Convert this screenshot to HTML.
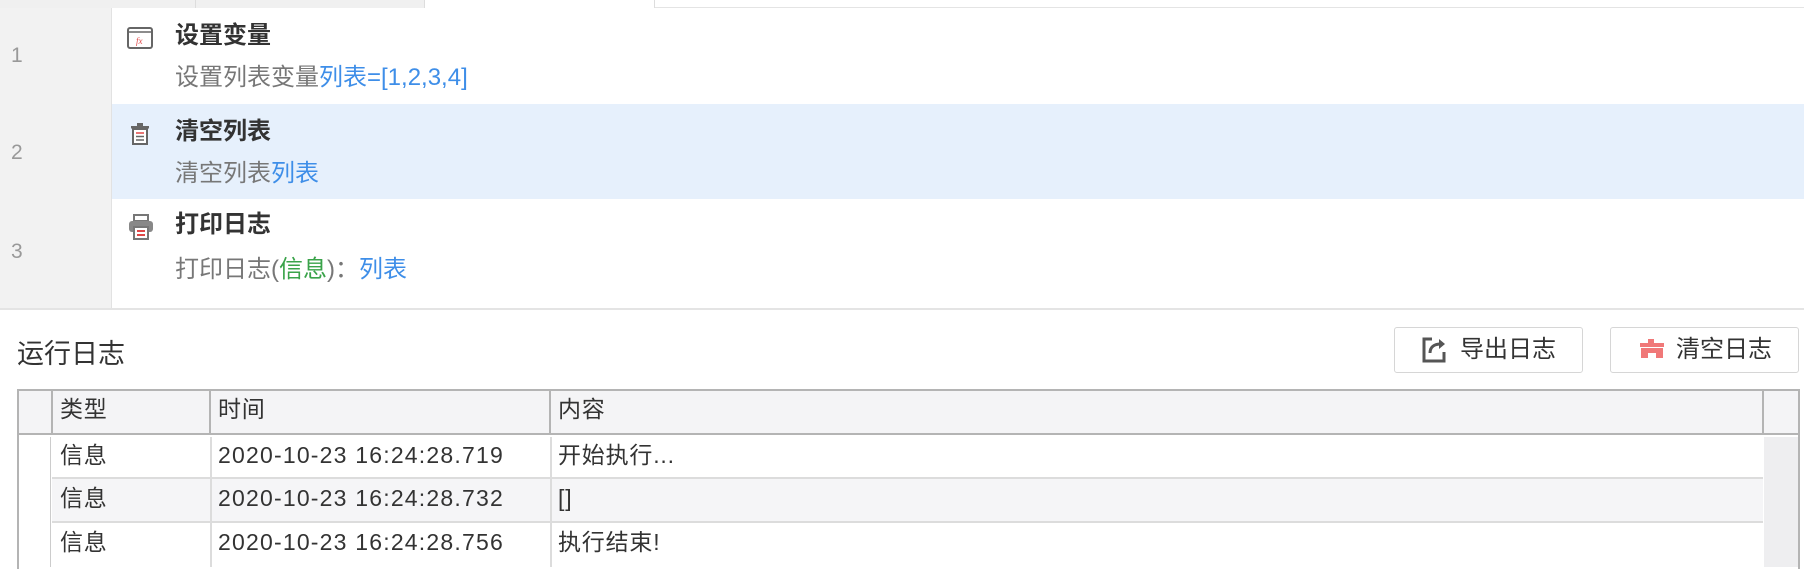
<!DOCTYPE html>
<html><head><meta charset="utf-8"><style>
*{margin:0;padding:0;box-sizing:border-box}
body{width:1804px;height:562px;overflow:hidden;background:#fff;font-family:"Liberation Sans","Noto Sans CJK SC",sans-serif;position:relative;color:#333}
.abs{position:absolute}
.tabs{left:0;top:0;width:1804px;height:8px;background:#fff;border-bottom:1px solid #e4e4e4}
.gutter{left:0;top:8px;width:112px;height:300px;background:#f2f2f2;border-right:1px solid #e2e2e2}
.num{left:11px;font-size:21px;color:#999;line-height:24px}
.row{left:112px;width:1692px}
.title{left:175px;font-size:24px;font-weight:bold;color:#333;line-height:28px}
.sub{left:175px;font-size:24px;color:#777;line-height:28px}
.b{color:#3e8ee8}.g{color:#3aa34a}
.ico{left:127px}
.t{font-size:23px;color:#333;line-height:28px;letter-spacing:0.8px}
.ts{letter-spacing:1.2px}
</style></head><body>
<div class="abs tabs"></div>
<div class="abs" style="left:0;top:0;width:196px;height:8px;background:#f0f0f0;border-right:1px solid #ddd"></div>
<div class="abs" style="left:196px;top:0;width:229px;height:8px;background:#f0f0f0;border-right:1px solid #ddd"></div>
<div class="abs" style="left:425px;top:0;width:230px;height:8px;background:#fff;border-right:1px solid #ddd"></div>
<div class="abs gutter"></div>
<div class="abs row" style="top:104px;height:95px;background:#e6f0fc"></div>
<div class="abs" style="left:0;top:308px;width:1804px;height:2px;background:#e4e4e4"></div>
<div class="abs num" style="top:44px">1</div>
<div class="abs num" style="top:141px">2</div>
<div class="abs num" style="top:240px">3</div>

<svg class="abs ico" style="top:26px" width="26" height="24" viewBox="0 0 26 24"><rect x="1" y="2" width="24" height="20" rx="2" fill="#fff" stroke="#666" stroke-width="2"/><line x1="2" y1="6" x2="24" y2="6" stroke="#666" stroke-width="1.5"/><text x="9" y="18" font-size="9" fill="#e04848" font-style="italic" font-family="Liberation Serif,serif">fx</text></svg>
<div class="abs title" style="top:22px">设置变量</div>
<div class="abs sub" style="top:64px">设置列表变量<span class="b">列表=[1,2,3,4]</span></div>

<svg class="abs ico" style="top:122px" width="26" height="24" viewBox="0 0 26 24"><rect x="10" y="1" width="6" height="3" fill="#666"/><rect x="4" y="4" width="18" height="2.5" fill="#666"/><rect x="6" y="7" width="14" height="15" fill="#fff" stroke="#666" stroke-width="2"/><line x1="9" y1="11" x2="17" y2="11" stroke="#e04848" stroke-width="1.5"/><line x1="9" y1="14.5" x2="17" y2="14.5" stroke="#666" stroke-width="1.5"/><line x1="9" y1="18" x2="17" y2="18" stroke="#666" stroke-width="1.5"/></svg>
<div class="abs title" style="top:118px">清空列表</div>
<div class="abs sub" style="top:160px">清空列表<span class="b">列表</span></div>

<svg class="abs ico" style="top:213px" width="28" height="28" viewBox="0 0 28 28"><rect x="7" y="2" width="14" height="6" fill="#fff" stroke="#777" stroke-width="2"/><rect x="2" y="8" width="24" height="11" rx="3" fill="#888"/><rect x="7" y="14" width="14" height="12" fill="#fff" stroke="#777" stroke-width="2"/><line x1="10" y1="18" x2="18" y2="18" stroke="#e04848" stroke-width="2"/><line x1="10" y1="22" x2="18" y2="22" stroke="#e04848" stroke-width="2"/></svg>
<div class="abs title" style="top:211px">打印日志</div>
<div class="abs sub" style="top:256px">打印日志(<span class="g">信息</span>)：<span class="b">列表</span></div>

<div class="abs" style="left:17px;top:338px;font-size:27px;line-height:32px;color:#333">运行日志</div>

<div class="abs" style="left:1394px;top:327px;width:189px;height:46px;border:1px solid #d6d6d6;border-radius:3px;background:#fff"></div>
<svg class="abs" style="left:1420px;top:336px" width="28" height="28" viewBox="0 0 28 28"><path d="M12 3H4v22h20v-9" fill="none" stroke="#555" stroke-width="3"/><path d="M10 17c0-6 4-9 11-9" fill="none" stroke="#555" stroke-width="3"/><path d="M19 3l6 5-6 5z" fill="#555"/></svg>
<div class="abs" style="left:1460px;top:336px;font-size:24px;line-height:28px;color:#333">导出日志</div>

<div class="abs" style="left:1610px;top:327px;width:189px;height:46px;border:1px solid #d6d6d6;border-radius:3px;background:#fff"></div>
<svg class="abs" style="left:1638px;top:338px" width="28" height="22" viewBox="0 0 28 22"><rect x="10" y="1" width="6" height="4" fill="#f07878"/><rect x="2" y="5" width="24" height="4" fill="#f07878"/><path d="M3 10h22v10h-7v-5h-8v5H3z" fill="#f07878"/></svg>
<div class="abs" style="left:1676px;top:336px;font-size:24px;line-height:28px;color:#333">清空日志</div>

<div class="abs" style="left:17px;top:389px;width:1783px;height:180px;border:2px solid #b4b4b4;border-bottom:none;background:#fff"></div>
<div class="abs" style="left:19px;top:391px;width:1779px;height:44px;background:#f4f4f6;border-bottom:2px solid #b4b4b4"></div>
<div class="abs" style="left:19px;top:437px;width:32px;height:130px;background:#fff;border-right:1px solid #ccc"></div>
<div class="abs" style="left:51px;top:391px;width:2px;height:44px;background:#b4b4b4"></div>
<div class="abs" style="left:209px;top:391px;width:2px;height:44px;background:#b4b4b4"></div>
<div class="abs" style="left:549px;top:391px;width:2px;height:44px;background:#b4b4b4"></div>
<div class="abs" style="left:1762px;top:391px;width:2px;height:44px;background:#b4b4b4"></div>
<div class="abs" style="left:1764px;top:437px;width:34px;height:130px;background:#eeeef0"></div>
<div class="abs" style="left:52px;top:477px;width:1711px;height:46px;background:#f5f5f7;border-top:2px solid #dcdcdc;border-bottom:2px solid #dcdcdc"></div>
<div class="abs" style="left:210px;top:437px;width:2px;height:130px;background:#dcdcdc"></div>
<div class="abs" style="left:550px;top:437px;width:2px;height:130px;background:#dcdcdc"></div>

<div class="abs t" style="left:60px;top:395px">类型</div>
<div class="abs t" style="left:218px;top:395px">时间</div>
<div class="abs t" style="left:558px;top:395px">内容</div>
<div class="abs t" style="left:60px;top:441px">信息</div>
<div class="abs t ts" style="left:218px;top:441px">2020-10-23 16:24:28.719</div>
<div class="abs t" style="left:558px;top:441px">开始执行...</div>
<div class="abs t" style="left:60px;top:484px">信息</div>
<div class="abs t ts" style="left:218px;top:484px">2020-10-23 16:24:28.732</div>
<div class="abs t" style="left:558px;top:484px">[]</div>
<div class="abs t" style="left:60px;top:528px">信息</div>
<div class="abs t ts" style="left:218px;top:528px">2020-10-23 16:24:28.756</div>
<div class="abs t" style="left:558px;top:528px">执行结束!</div>
</body></html>
